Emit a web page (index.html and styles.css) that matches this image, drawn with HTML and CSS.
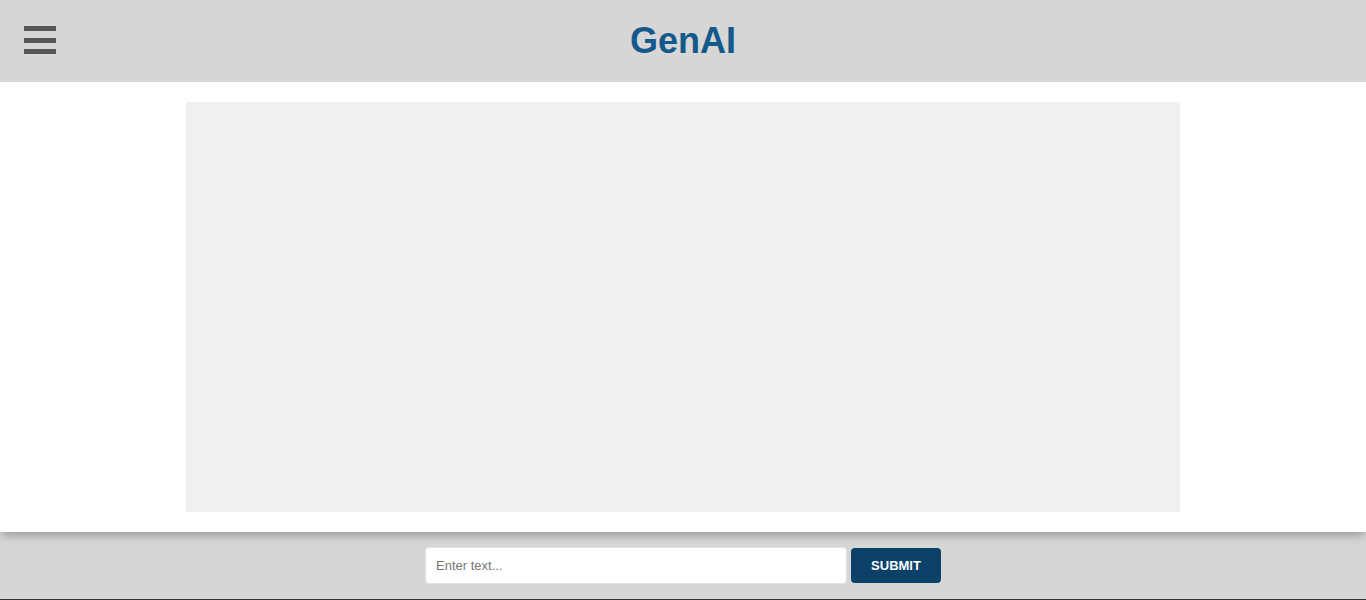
FILE: index.html
```html
<!DOCTYPE html>
<html>
<head>
<meta charset="utf-8">
<link rel="stylesheet" href="styles.css">
</head>
<body>
<div class="app">
  <header class="topbar">
    <button class="menu" aria-label="menu">
      <span class="bar"></span><span class="bar"></span><span class="bar"></span>
    </button>
    <h1 class="title">GenAI</h1>
  </header>
  <main class="main">
    <div class="output"></div>
  </main>
  <footer class="footer">
    <form class="form">
      <input class="input" type="text" placeholder="Enter text...">
      <button class="submit" type="button">SUBMIT</button>
    </form>
  </footer>
</div>
</body>
</html>
```
FILE: styles.css
```css
* { box-sizing: border-box; }
html, body { margin: 0; padding: 0; }
body {
  font-family: "Liberation Sans", Arial, sans-serif;
  background: #d6d6d6;
}
.app {
  height: 600px;
  display: flex;
  flex-direction: column;
}
.topbar {
  height: 82px;
  flex: none;
  background: #d6d6d6;
  display: flex;
  align-items: center;
  justify-content: center;
  position: relative;
}
.menu {
  position: absolute;
  left: 24px;
  top: 26px;
  width: 32px;
  height: 28px;
  padding: 0;
  border: 0;
  background: transparent;
  display: flex;
  flex-direction: column;
  justify-content: space-between;
}
.bar {
  display: block;
  width: 32px;
  height: 5px;
  background: #565656;
}
.title {
  margin: 0;
  font-size: 36px;
  font-weight: bold;
  color: #135a8a;
  line-height: 1;
}
.main {
  height: 450px;
  flex: none;
  background: #fff;
  padding: 20px 0;
  display: flex;
  justify-content: center;
  box-shadow: 0 6px 8px -2px rgba(0,0,0,0.25);
  position: relative;
  z-index: 1;
}
.output {
  width: 994px;
  height: 410px;
  background: #f0f0f0;
}
.footer {
  flex: 1;
  background: #d6d6d6;
  border-bottom: 1px solid #333;
  display: flex;
  justify-content: center;
  padding-top: 15px;
}
.form {
  display: flex;
  align-items: flex-start;
  gap: 4px;
  height: 37px;
}
.input {
  width: 422px;
  height: 37px;
  border: 1px solid #e2e2e2;
  border-radius: 4px;
  padding: 0 10px;
  font-family: "Liberation Sans", Arial, sans-serif;
  font-size: 13px;
  background: #fff;
  outline: none;
}
.input::placeholder { color: #757575; }
.submit {
  margin-top: 1px;
  width: 90px;
  height: 35px;
  border: 0;
  border-radius: 4px;
  background: #0b4168;
  color: #fff;
  font-family: "Liberation Sans", Arial, sans-serif;
  font-size: 13px;
  font-weight: bold;
}
```
